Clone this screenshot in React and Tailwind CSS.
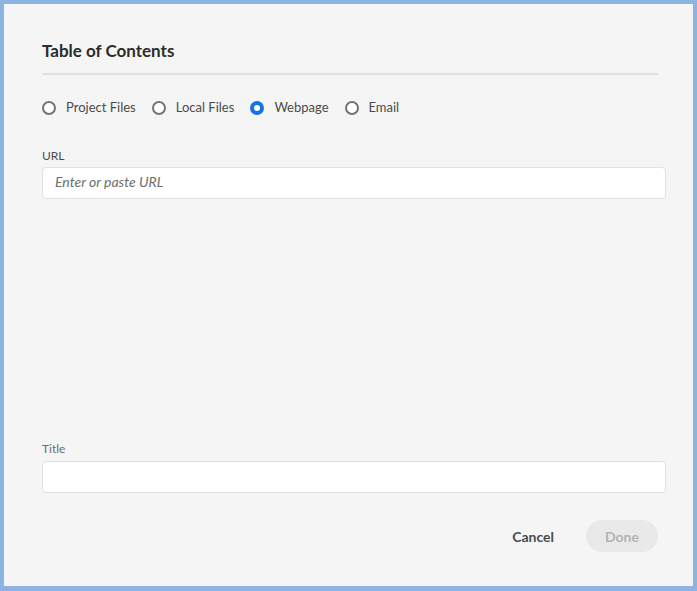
import { useState } from 'react'

const SOURCES = ['Project Files', 'Local Files', 'Webpage', 'Email']

function Radio({ label, checked, onSelect }) {
    return (
        <button onClick={onSelect} className="flex items-center gap-[10px] h-6">
            {checked ? (
                <span className="w-[14px] h-[14px] rounded-full border-[4px] border-[#1473e6] bg-white" />
            ) : (
                <span className="w-[14px] h-[14px] rounded-full border-2 border-[#747474] bg-white" />
            )}
            <span className="text-[13px] text-[#4b4b4b]">{label}</span>
        </button>
    )
}

export default function App() {
    const [source, setSource] = useState('Webpage')

    return (
        <div className="w-[697px] h-[591px] bg-[#8db3e2] pl-[4px] pt-[4px] pr-[4px] pb-[5px]" style={{ fontFamily: 'Lato, "Open Sans", sans-serif' }}>
            <div className="h-full bg-[#f5f5f5] pl-[38px] pr-[35px] flex flex-col">
                {/* Шапка */}
                <h1 className="mt-[36px] text-[17px] leading-[22px] font-bold text-[#2c2c2c]">Table of Contents</h1>
                <div className="mt-[11px] h-[2px] bg-[#e1e1e1]" />

                {/* Источник */}
                <div className="mt-[21px] flex items-center gap-4">
                    {SOURCES.map((s) => (
                        <Radio key={s} label={s} checked={source === s} onSelect={() => setSource(s)} />
                    ))}
                </div>

                <label className="mt-[28px] text-[12px] leading-4 text-[#4b4b4b]">URL</label>
                <input
                    placeholder="Enter or paste URL"
                    className="mt-[3px] -mr-2 h-[32px] bg-white border border-[#e1e1e1] rounded-[4px] px-3 pb-[3px] text-[14px] text-[#2c2c2c] placeholder:italic placeholder:text-[#6e6e6e] outline-none"
                />

                <div className="flex-1" />

                <label className="text-[12px] leading-4 text-[#6e6e6e]">Title</label>
                <input className="mt-[4px] -mr-2 h-[32px] bg-white border border-[#e1e1e1] rounded-[4px] px-3 text-[14px] outline-none" />

                {/* Кнопки */}
                <div className="mt-[27px] mb-[34px] flex justify-end items-center gap-[16px]">
                    <button className="px-[16px] h-[32px] rounded-full text-[14px] font-bold text-[#4b4b4b]">Cancel</button>
                    <button disabled className="w-[72px] h-[32px] rounded-full bg-[#e9e9e9] text-[14px] font-bold text-[#b3b3b3]">Done</button>
                </div>
            </div>
        </div>
    )
}
